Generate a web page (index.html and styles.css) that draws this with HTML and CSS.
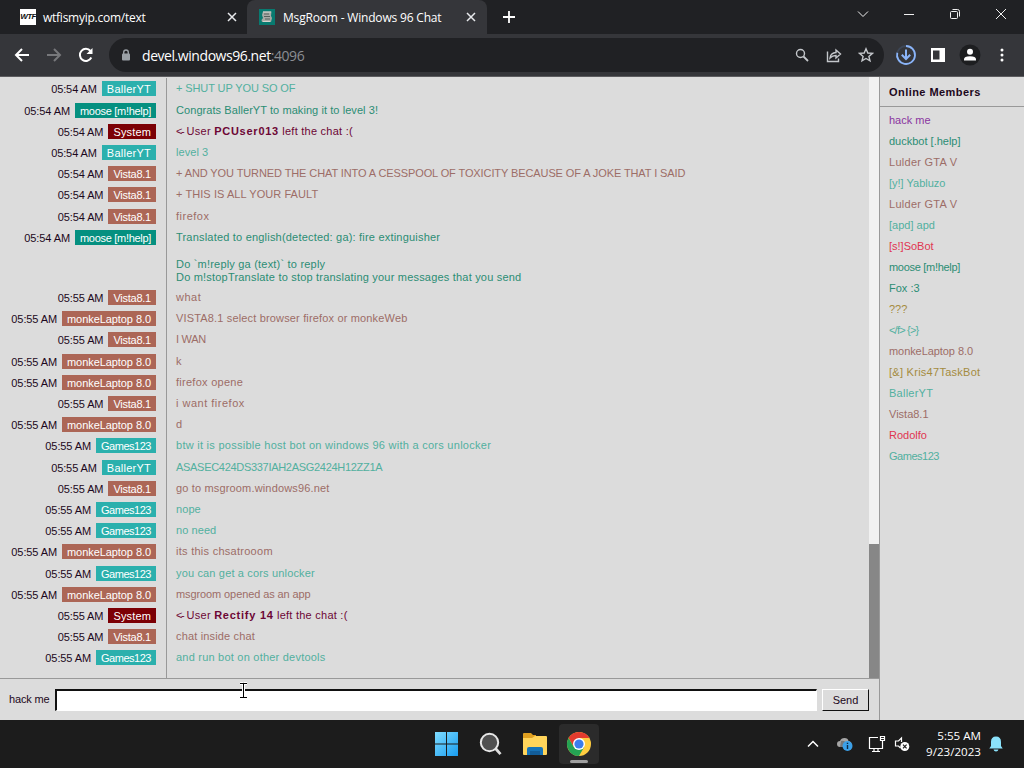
FILE: index.html
```html
<!DOCTYPE html>
<html lang="en">
<head>
<meta charset="UTF-8">
<meta name="viewport" content="width=device-width, initial-scale=1.0">
<title>MsgRoom - Windows 96 Chat</title>
<link rel="stylesheet" href="styles.css">
</head>
<body>
<!-- Tab strip -->
<div class="tabs">
    <div class="tab">
        <span class="favicon wtf">WTF</span>
        <span class="tab-title">wtfismyip.com/text</span>
        <svg class="tab-close" width="10" height="10" viewBox="0 0 10 10"><path d="M1 1l8 8M9 1l-8 8"/></svg>
    </div>
    <div class="tab active">
        <svg class="favicon" width="16" height="16" viewBox="0 0 16 16">
            <rect width="16" height="16" fill="#087a70"/>
            <path d="M4 2.500h8.500L12 7l1 2-1 4H3l-.5-2L4 9 3 6z" fill="#a9aaa6"/>
            <path d="M5 5h5M5 7.500h6M6 10h5" stroke="#55605c"/>
            <path d="M4 3h8M4 12.500h7" stroke="#d5d5d0"/>
        </svg>
        <span class="tab-title">MsgRoom - Windows 96 Chat</span>
        <svg class="tab-close" width="10" height="10" viewBox="0 0 10 10"><path d="M1 1l8 8M9 1l-8 8"/></svg>
    </div>
    <svg class="new-tab" width="12" height="12" viewBox="0 0 12 12"><path d="M6 0v12M0 6h12"/></svg>
    <div class="window-buttons">
        <svg width="12" height="12" viewBox="0 0 12 12"><path d="M1 3.500l5 5 5-5"/></svg>
        <svg width="12" height="12" viewBox="0 0 12 12"><path d="M1 6.500h10"/></svg>
        <svg width="12" height="12" viewBox="0 0 12 12"><rect x="1.500" y="3.500" width="7" height="7" rx="1"/><path d="M3.500 1.500h5q2 0 2 2v5"/></svg>
        <svg width="12" height="12" viewBox="0 0 12 12"><path d="M1 1l10 10M11 1L1 11"/></svg>
    </div>
</div>

<!-- Toolbar -->
<div class="toolbar">
    <div class="nav">
        <svg width="16" height="16" viewBox="0 0 16 16"><path d="M15 8H2M8 2L2 8l6 6"/></svg>
        <svg class="off" width="16" height="16" viewBox="0 0 16 16"><path d="M1 8h13M8 2l6 6-6 6"/></svg>
        <svg width="16" height="16" viewBox="0 0 16 16"><path d="M13.300 10.500A6 6 0 1 1 12.500 4"/><path d="M14.500 1v6h-6z" fill="#fff" stroke="none"/></svg>
    </div>
    <div class="omnibox">
        <svg class="lock" width="10" height="12" viewBox="0 0 10 12"><path d="M2.700 5V3.300a2.300 2.300 0 0 1 4.600 0V5" fill="none" stroke="#9aa0a6" stroke-width="1.400"/><rect x="1" y="4.500" width="8" height="7" rx="1" fill="#9aa0a6"/></svg>
        <span class="url">devel.windows96.net<span class="port">:4096</span></span>
        <div class="omni-icons">
            <svg width="16" height="16" viewBox="0 0 16 16"><circle cx="6.500" cy="6.500" r="4"/><path d="M9.500 9.500l4.500 4.500" stroke-width="1.800"/></svg>
            <svg width="16" height="16" viewBox="0 0 16 16"><path d="M1.500 4.500v10h11v-3"/><path d="M4 11c.5-3.500 2.500-5.300 6-5.500V3l4.500 4-4.500 4V8.500C7.500 8.500 5.500 9.500 4 11z"/></svg>
            <svg width="16" height="16" viewBox="0 0 16 16"><path d="M8 1.800l1.800 4.200 4.600.4-3.500 3 1.100 4.500L8 11.500l-4 2.400 1.100-4.500-3.500-3 4.600-.4z"/></svg>
        </div>
    </div>
    <div class="actions">
        <svg width="22" height="22" viewBox="0 0 22 22"><circle cx="11" cy="11" r="9" fill="none" stroke="#3d4656" stroke-width="1.800"/><path d="M11 2a9 9 0 1 1-8.700 6.700" fill="none" stroke="#8ab4f8" stroke-width="1.800"/><path d="M11 5.500v9M6.800 10.700L11 15l4.200-4.300" fill="none" stroke="#8ab4f8" stroke-width="2"/></svg>
        <svg width="14" height="14" viewBox="0 0 14 14"><path d="M0 0h14v14H0z" fill="#fff"/><path d="M2 2.500h6.500v9H2z" fill="#35363a"/></svg>
        <svg width="22" height="22" viewBox="0 0 22 22"><circle cx="11" cy="11" r="10.500" fill="#1d1e20"/><circle cx="11" cy="7.800" r="3" fill="#fff"/><path d="M5 16.500v-1.300q0-3 6-3t6 3v1.300z" fill="#fff"/></svg>
        <svg class="menu" width="4" height="14" viewBox="0 0 4 14" fill="#fff"><circle cx="2" cy="2" r="1.500"/><circle cx="2" cy="7" r="1.500"/><circle cx="2" cy="12" r="1.500"/></svg>
    </div>
</div>

<!-- Chat page -->
<div class="page">
    <div class="chat">
        <div class="log">
            <div class="messages">
                <div class="row"><div class="meta"><span class="time">05:54 AM</span><span class="nick teal baller">BallerYT</span></div><p class="text t-teal caps">+ SHUT UP YOU SO OF</p></div>
                <div class="row"><div class="meta"><span class="time">05:54 AM</span><span class="nick green moose">moose [m!help]</span></div><p class="text t-green even">Congrats BallerYT to making it to level 3!</p></div>
                <div class="row"><div class="meta"><span class="time">05:54 AM</span><span class="nick system">System</span></div><p class="text t-system"><span class="arrow">&lt;-</span> User <b>PCUser013</b> left the chat :(</p></div>
                <div class="row"><div class="meta"><span class="time">05:54 AM</span><span class="nick teal baller">BallerYT</span></div><p class="text t-teal even">level 3</p></div>
                <div class="row"><div class="meta"><span class="time">05:54 AM</span><span class="nick brown vista">Vista8.1</span></div><p class="text t-brown caps">+ AND YOU TURNED THE CHAT INTO A CESSPOOL OF TOXICITY BECAUSE OF A JOKE THAT I SAID</p></div>
                <div class="row"><div class="meta"><span class="time">05:54 AM</span><span class="nick brown vista">Vista8.1</span></div><p class="text t-brown even">+ THIS IS ALL YOUR FAULT</p></div>
                <div class="row"><div class="meta"><span class="time">05:54 AM</span><span class="nick brown vista">Vista8.1</span></div><p class="text t-brown wide">firefox</p></div>
                <div class="row"><div class="meta"><span class="time">05:54 AM</span><span class="nick green moose">moose [m!help]</span></div><p class="text t-green multi">Translated to english(detected: ga): fire extinguisher<br><br>Do `m!reply ga (text)` to reply<br>Do m!stopTranslate to stop translating your messages that you send</p></div>
                <div class="row"><div class="meta"><span class="time">05:55 AM</span><span class="nick brown vista">Vista8.1</span></div><p class="text t-brown wide">what</p></div>
                <div class="row"><div class="meta"><span class="time">05:55 AM</span><span class="nick brown monke">monkeLaptop 8.0</span></div><p class="text t-brown">VISTA8.1 select browser firefox or monkeWeb</p></div>
                <div class="row"><div class="meta"><span class="time">05:55 AM</span><span class="nick brown vista">Vista8.1</span></div><p class="text t-brown caps snug">I WAN</p></div>
                <div class="row"><div class="meta"><span class="time">05:55 AM</span><span class="nick brown monke">monkeLaptop 8.0</span></div><p class="text t-brown">k</p></div>
                <div class="row"><div class="meta"><span class="time">05:55 AM</span><span class="nick brown monke">monkeLaptop 8.0</span></div><p class="text t-brown loose">firefox opene</p></div>
                <div class="row"><div class="meta"><span class="time">05:55 AM</span><span class="nick brown vista">Vista8.1</span></div><p class="text t-brown wide">i want firefox</p></div>
                <div class="row"><div class="meta"><span class="time">05:55 AM</span><span class="nick brown monke">monkeLaptop 8.0</span></div><p class="text t-brown">d</p></div>
                <div class="row"><div class="meta"><span class="time">05:55 AM</span><span class="nick teal games">Games123</span></div><p class="text t-teal loose">btw it is possible host bot on windows 96 with a cors unlocker</p></div>
                <div class="row"><div class="meta"><span class="time">05:55 AM</span><span class="nick teal baller">BallerYT</span></div><p class="text t-teal caps snug">ASASEC424DS337IAH2ASG2424H12ZZ1A</p></div>
                <div class="row"><div class="meta"><span class="time">05:55 AM</span><span class="nick brown vista">Vista8.1</span></div><p class="text t-brown">go to msgroom.windows96.net</p></div>
                <div class="row"><div class="meta"><span class="time">05:55 AM</span><span class="nick teal games">Games123</span></div><p class="text t-teal even">nope</p></div>
                <div class="row"><div class="meta"><span class="time">05:55 AM</span><span class="nick teal games">Games123</span></div><p class="text t-teal even">no need</p></div>
                <div class="row"><div class="meta"><span class="time">05:55 AM</span><span class="nick brown monke">monkeLaptop 8.0</span></div><p class="text t-brown loose">its this chsatrooom</p></div>
                <div class="row"><div class="meta"><span class="time">05:55 AM</span><span class="nick teal games">Games123</span></div><p class="text t-teal">you can get a cors unlocker</p></div>
                <div class="row"><div class="meta"><span class="time">05:55 AM</span><span class="nick brown monke">monkeLaptop 8.0</span></div><p class="text t-brown close">msgroom opened as an app</p></div>
                <div class="row"><div class="meta"><span class="time">05:55 AM</span><span class="nick system">System</span></div><p class="text t-system"><span class="arrow">&lt;-</span> User <b>Rectify 14</b> left the chat :(</p></div>
                <div class="row"><div class="meta"><span class="time">05:55 AM</span><span class="nick brown vista">Vista8.1</span></div><p class="text t-brown">chat inside chat</p></div>
                <div class="row"><div class="meta"><span class="time">05:55 AM</span><span class="nick teal games">Games123</span></div><p class="text t-teal multi-gap">and run bot on other devtools</p></div>
                <div class="row filler"><div class="meta"></div></div>
            </div>
            <div class="scrollbar"><div class="thumb"></div></div>
        </div>
        <form class="send-bar">
            <label for="message">hack me</label>
            <input type="text" id="message">
            <button type="button">Send</button>
            <svg class="cursor" width="9" height="17" viewBox="0 0 9 17"><path d="M1 1.500h3M5 1.500h3M4.500 2v13M1 15.500h3M5 15.500h3" stroke="#fff" stroke-width="3"/><path d="M1 1.500h7M4.500 1v15M1 15.500h7" stroke="#000"/></svg>
        </form>
    </div>
    <div class="members">
        <h2>Online Members</h2>
        <ul>
            <li class="t-purple">hack me</li>
            <li class="t-green">duckbot [.help]</li>
            <li class="t-brown loose">Lulder GTA V</li>
            <li class="t-teal">[y!] Yabluzo</li>
            <li class="t-brown loose">Lulder GTA V</li>
            <li class="t-teal">[apd] apd</li>
            <li class="t-red">[s!]SoBot</li>
            <li class="t-green moose">moose [m!help]</li>
            <li class="t-green">Fox :3</li>
            <li class="t-olive">???</li>
            <li class="t-teal tight">&lt;/f&gt; {&gt;}</li>
            <li class="t-brown monke">monkeLaptop 8.0</li>
            <li class="t-olive loose">[&amp;] Kris47TaskBot</li>
            <li class="t-teal baller">BallerYT</li>
            <li class="t-brown">Vista8.1</li>
            <li class="t-red">Rodolfo</li>
            <li class="t-teal games">Games123</li>
        </ul>
    </div>
</div>

<!-- Taskbar -->
<div class="taskbar">
    <div class="apps">
        <svg width="24" height="24" viewBox="0 0 24 24">
            <defs><linearGradient id="win" x2="1" y2="1"><stop offset="0" stop-color="#7fdcff"/><stop offset="1" stop-color="#189cf0"/></linearGradient></defs>
            <path d="M1 0h11v11.500H1zM13 0h11v11.500H13zM1 12.500h11V24H1zM13 12.500h11V24H13z" fill="url(#win)"/>
        </svg>
        <svg width="24" height="24" viewBox="0 0 24 24"><path d="M17.500 16.500l5 5.700" stroke="#ddd" stroke-width="2.800"/><circle cx="11.500" cy="10.500" r="8.700" fill="#505050" stroke="#e6e6e6" stroke-width="2"/></svg>
        <svg width="26" height="24" viewBox="0 0 26 24">
            <path d="M1 2q0-1 1-1h7l2 2h3v6H1z" fill="#e0a020"/>
            <path d="M1 6h9l3-2h11q1 0 1 1v17q0 1-1 1H2q-1 0-1-1z" fill="#ffd45a"/>
            <path d="M5 23v-6q0-2 2-2h12q2 0 2 2v6z" fill="#1673b8"/><path d="M8 19h10v4H8z" fill="#125d99"/>
        </svg>
        <div class="running">
            <svg width="26" height="26" viewBox="0 0 26 26">
                <circle cx="13" cy="13" r="12" fill="#ffcd40"/>
                <path d="M2.600 7A12 12 0 0 1 23.400 7H13L7.800 16z" fill="#e33b2e"/>
                <path d="M2.600 7A12 12 0 0 0 13 25l5.200-9H7.800z" fill="#24a353"/>
                <circle cx="13" cy="13" r="6" fill="#fff"/><circle cx="13" cy="13" r="4.600" fill="#3b7ded"/>
            </svg>
        </div>
    </div>
    <div class="tray">
        <svg class="chevron" width="12" height="12" viewBox="0 0 12 12"><path d="M1 8.500l5-5 5 5" fill="none" stroke="#fff" stroke-width="1.500"/></svg>
        <svg class="cloud" width="17" height="16" viewBox="0 0 17 16"><path d="M4 11q-3 0-3-3t3-3q1-3 4.500-3t4 3q3 .5 3 3t-3 3z" fill="#a5a5a5"/><path d="M5 5q4-1 7 4l-1 2H4z" fill="#777"/><circle cx="11.500" cy="10" r="5" fill="#3ba0e8"/><path d="M11.500 9v4M11.500 6.800v1.200" stroke="#0b2a44" stroke-width="1.400"/></svg>
        <svg class="net" width="18" height="18" viewBox="0 0 18 18" fill="none" stroke="#fff" stroke-width="1.200"><path d="M10 2.500H1.500v11h13V9M6 14v2.500M10 14v2.500M4 16.500h8M12.500 1.500h4v4h-4zM14.500 5.500v8M12.500 3.500h4"/></svg>
        <svg class="sound" width="16" height="16" viewBox="0 0 16 16"><path d="M7.500 6V2L4.500 5H1.500v5h3l2 2" fill="none" stroke="#fff" stroke-width="1.200"/><circle cx="10.800" cy="10.500" r="4.500" fill="#fff"/><path d="M9 8.700l3.600 3.600M12.600 8.700L9 12.300" stroke="#1c1c1c" stroke-width="1.200"/></svg>
        <div class="clock">5:55 AM<br>9/23/2023</div>
        <svg class="bell" width="14" height="16" viewBox="0 0 14 16"><path d="M7 .5q5 0 5 5.500v4l1.700 2.500H.3L2 10V6Q2 .5 7 .5z" fill="#8be2fb"/><path d="M4.500 13.500h5q-.5 2-2.500 2t-2.500-2z" fill="#8be2fb"/></svg>
    </div>
</div>
</body>
</html>
```
FILE: styles.css
```css
* {
    box-sizing: border-box;
}
body {
    margin: 0;
    width: 1024px;
    height: 768px;
    overflow: hidden;
    display: flex;
    flex-direction: column;
    font-family: "Liberation Sans", Arial, sans-serif;
    font-size: 11px;
    background-color: #dcdcdc;
}
svg {
    display: block;
    flex: none;
}

/* browser tabs */
.tabs {
    height: 34px;
    flex: none;
    display: flex;
    align-items: center;
    background-color: #202124;
    color: #fff;
}
.tab {
    width: 247px;
    height: 34px;
    padding: 0 10px 0 20px;
    display: flex;
    align-items: center;
    font-family: "Open Sans", sans-serif;
    font-size: 12px;
    letter-spacing: -0.25px;
    white-space: nowrap;
}
.tab.active {
    width: 240px;
    padding: 0 11px 0 12px;
    border-radius: 8px 8px 0 0;
    background-color: #35363a;
    letter-spacing: -0.18px;
}
.favicon {
    width: 16px;
    height: 16px;
    margin-right: 8px;
}
.wtf {
    margin-right: 7px;
    background-color: #fff;
    color: #111;
    font: italic bold 8px/16px "Liberation Sans", sans-serif;
    letter-spacing: -0.6px;
    text-align: center;
}
.tab-title {
    flex: 1;
}
.tab-close {
    fill: none;
    stroke: #e8eaed;
    stroke-width: 1.5;
}
.new-tab {
    margin-left: 16px;
    stroke: #fff;
    stroke-width: 1.8;
}
.window-buttons {
    margin-left: auto;
    margin-bottom: 6px;
    padding-right: 17px;
    display: flex;
    gap: 34px;
    fill: none;
    stroke: #f0f0f0;
}

/* address bar */
.toolbar {
    height: 43px;
    flex: none;
    display: flex;
    align-items: center;
    background-color: #35363a;
    border-bottom: 1px solid #5c5c5f;
}
.nav {
    width: 109px;
    padding-left: 14px;
    display: flex;
    gap: 16px;
    fill: none;
    stroke: #fff;
    stroke-width: 2;
}
.off {
    stroke: #77787b;
}
.omnibox {
    width: 775px;
    height: 34px;
    padding: 0 10px 0 12px;
    display: flex;
    align-items: center;
    border-radius: 17px;
    background-color: #202124;
}
.url {
    flex: 1;
    margin-left: 11px;
    color: #fff;
    font-family: "Open Sans", sans-serif;
    font-size: 14px;
    letter-spacing: -0.44px;
}
.port {
    color: #8b8e93;
}
.omni-icons {
    display: flex;
    gap: 16px;
    fill: none;
    stroke: #c4c7cb;
    stroke-width: 1.4;
}
.actions {
    margin-left: 11px;
    display: flex;
    align-items: center;
    gap: 14px;
}
.menu {
    margin-left: 5px;
}

/* chat */
.page {
    height: 643px;
    flex: none;
    display: flex;
    color: #1c0820;
}
.chat {
    width: 880px;
    display: flex;
    flex-direction: column;
    border-right: 1px solid #999;
}
.log {
    height: 602px;
    display: flex;
    border-bottom: 1px solid #999;
}
.messages {
    flex: 1;
    padding-top: 1.4px;
    overflow: hidden;
    display: flex;
    flex-direction: column;
}
.row {
    display: flex;
    flex: none;
}
.filler {
    flex: 1;
}
.meta {
    width: 167px;
    padding: 3px 10px 0 0;
    display: flex;
    justify-content: flex-end;
    align-items: flex-start;
    border-right: 1px solid #999;
    line-height: 15px;
    white-space: nowrap;
}
.time {
    margin-right: 5px;
    padding-top: 1px;
    letter-spacing: -0.1px;
}
.nick {
    height: 15px;
    padding: 1px 5px 0;
    color: #fff;
}
.teal {
    background-color: #2bb0ad;
}
.green {
    background-color: #059080;
}
.brown {
    background-color: #ac6656;
}
.system {
    background-color: #7c0005;
    letter-spacing: 0.15px;
}
.baller {
    letter-spacing: 0.25px;
}
.moose {
    letter-spacing: -0.3px;
}
.vista {
    letter-spacing: -0.25px;
}
.monke {
    letter-spacing: -0.07px;
}
.games {
    letter-spacing: -0.48px;
}
.text {
    margin: 0;
    padding: 4px 0 4px 9px;
    line-height: 13.2px;
    letter-spacing: 0.16px;
    white-space: nowrap;
}
.text.multi {
    padding-top: 4.4px;
    padding-bottom: 3px;
    letter-spacing: 0.2px;
}
.text.multi-gap {
    letter-spacing: 0.22px;
}
.text.caps {
    letter-spacing: -0.1px;
}
.text.snug {
    letter-spacing: -0.3px;
}
.text.close {
    letter-spacing: -0.1px;
}
.text.even {
    letter-spacing: 0.07px;
}
.text.wide {
    letter-spacing: 0.5px;
}
.loose, .text.loose {
    letter-spacing: 0.27px;
}
.t-teal {
    color: #52b09f;
}
.t-green {
    color: #2b8d74;
}
.t-brown {
    color: #9c6d67;
}
.t-system {
    color: #6d0635;
}
.text.t-system {
    letter-spacing: 0.25px;
}
.t-system b {
    letter-spacing: 0.75px;
}
.arrow {
    letter-spacing: -1.4px;
}
.t-purple {
    color: #8a35a0;
}
.t-red {
    color: #e03550;
}
.t-olive {
    color: #a48b40;
}
.scrollbar {
    width: 10px;
    padding-top: 467px;
    background-color: #f1f1f1;
}
.thumb {
    height: 134px;
    background-color: #878787;
}
.send-bar {
    position: relative;
    height: 41px;
    padding: 0 10px 0 9px;
    display: flex;
    align-items: center;
}
.send-bar label {
    width: 46px;
    padding-bottom: 1px;
    letter-spacing: -0.15px;
}
.send-bar input {
    width: 762px;
    height: 22px;
    border: 1px solid #fff;
    border-top: 2px solid #111;
    border-left: 2px solid #111;
    background-color: #fff;
}
.send-bar button {
    width: 47px;
    height: 22px;
    margin-left: 5px;
    padding: 0;
    border: 1px solid #fff;
    border-right-color: #111;
    border-bottom-color: #111;
    background-color: #dcdcdc;
    color: #1c0820;
    font: inherit;
}
.cursor {
    position: absolute;
    left: 239px;
    top: 3px;
}
.members {
    flex: 1;
}
.members h2 {
    height: 30px;
    margin: 0;
    padding-left: 9px;
    border-bottom: 1px solid #999;
    font-size: 11px;
    line-height: 30px;
    letter-spacing: 0.45px;
}
.members ul {
    margin: 0;
    padding: 3px 0 0 9px;
    list-style: none;
}
.members li {
    height: 21px;
    line-height: 21px;
}
.members .tight {
    letter-spacing: -0.8px;
}

/* taskbar */
.taskbar {
    height: 48px;
    flex: none;
    display: flex;
    justify-content: space-between;
    background-color: #1c1c1c;
}
.apps {
    padding-left: 434px;
    display: flex;
    align-items: center;
    gap: 20px;
}
.running {
    position: relative;
    width: 40px;
    height: 40px;
    margin-left: -9px;
    display: flex;
    justify-content: center;
    align-items: center;
    border-radius: 4px;
    background-color: #2b2b2b;
}
.running::after {
    content: "";
    position: absolute;
    bottom: 1px;
    width: 18px;
    height: 3px;
    border-radius: 2px;
    background-color: #a0a0a0;
}
.tray {
    padding-right: 21px;
    display: flex;
    align-items: center;
    color: #fff;
}
.cloud {
    margin-left: 17px;
}
.net {
    margin-left: 15px;
}
.sound {
    margin-left: 8px;
}
.clock {
    width: 71px;
    text-align: right;
    font-family: "Open Sans", sans-serif;
    font-size: 11.6px;
    line-height: 16px;
}
.bell {
    margin-left: 8px;
}
```
